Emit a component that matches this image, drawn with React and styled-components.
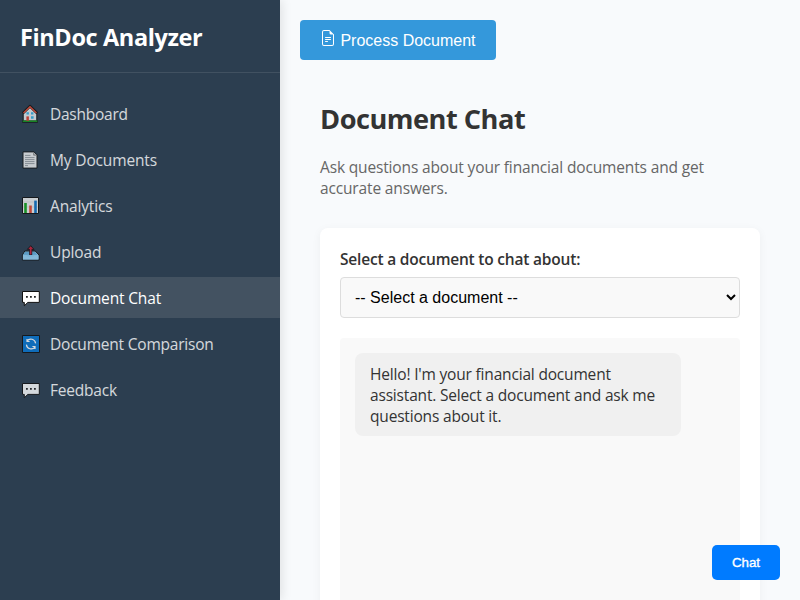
import React from 'react';
import styled, { createGlobalStyle, css } from 'styled-components';
import { BsFileEarmarkText } from 'react-icons/bs';

const GlobalStyle = createGlobalStyle`
  * { box-sizing: border-box; margin: 0; padding: 0; }
  body {
    height: 100vh;
    overflow: hidden;
    background: #f8fafc;
    color: #333;
    font: 400 15.5px/21px "Open Sans", "Noto Sans", sans-serif;
    letter-spacing: -0.15px;
  }
`;

const Layout = styled.div`
  display: flex;
  height: 100vh;
  overflow: hidden;
`;

const Sidebar = styled.aside`
  flex: none;
  width: 280px;
  background: #2c3e50;
  color: #fff;
  box-shadow: 2px 0 10px rgba(0, 0, 0, 0.1);
`;

const Brand = styled.h2`
  height: 73px;
  padding: 21px 20px 19px;
  border-bottom: 1px solid rgba(255, 255, 255, 0.1);
  font-size: 23.5px;
  line-height: 32px;
  font-weight: 700;
  letter-spacing: -0.38px;
`;

const Nav = styled.nav`
  display: flex;
  flex-direction: column;
  gap: 5px;
  padding: 20px 0;
`;

const NavItem = styled.a`
  display: flex;
  align-items: center;
  gap: 10px;
  height: 41px;
  padding: 0 20px;
  color: #fff;
  ${({ $active }) =>
    $active
      ? css`
          background: #435261;
        `
      : css`
          & > * {
            opacity: 0.8;
          }
        `}
`;

const NavIcon = styled.svg`
  display: block;
  flex: none;
  width: 20px;
  height: 20px;
`;

const NavLabel = styled.span`
  padding-top: 2px;
  letter-spacing: ${({ $track }) => $track || -0.15}px;
`;

const Main = styled.main`
  flex: 1;
  min-width: 0;
  padding: 20px;
`;

const ProcessButton = styled.button`
  display: flex;
  align-items: center;
  gap: 4.4px;
  width: 196px;
  height: 40px;
  padding: 2px 20px 0;
  border: 0;
  border-radius: 4px;
  background: #3498db;
  color: #fff;
  font: 16px "Liberation Sans", Arial, sans-serif;
  letter-spacing: 0;
  white-space: nowrap;

  svg {
    flex: none;
    margin-bottom: 6px;
  }
`;

const Content = styled.section`
  padding: 40px 20px 0;
`;

const Title = styled.h1`
  font-size: 27.2px;
  line-height: 38px;
  font-weight: 700;
  letter-spacing: -0.5px;
`;

const Intro = styled.p`
  margin-top: 19px;
  color: #666;
`;

const Card = styled.div`
  height: 600px;
  margin-top: 29px;
  padding: 20px;
  border-radius: 8px;
  background: #fff;
  box-shadow: 0 2px 10px rgba(0, 0, 0, 0.05);
`;

const Label = styled.label`
  display: block;
  height: 29px;
  padding-top: 1px;
  font-weight: 600;
  letter-spacing: -0.2px;
`;

const Select = styled.select`
  display: block;
  width: 100%;
  height: 41px;
  padding: 10px;
  border: 1px solid #ddd;
  border-radius: 4px;
  background-color: #f9f9f9;
  color: #000;
  font: 16px "Liberation Sans", Arial, sans-serif;
  letter-spacing: 0;
`;

const Messages = styled.div`
  height: 400px;
  margin-top: 20px;
  padding: 15px;
  border-radius: 4px;
  background: #f9f9f9;
`;

const Bubble = styled.p`
  width: 326px;
  padding: 11px 15px 9px;
  border-radius: 8px;
  background: #f0f0f0;
  letter-spacing: -0.18px;
`;

const ChatButton = styled.button`
  position: fixed;
  right: 20px;
  bottom: 20px;
  width: 68px;
  height: 35px;
  border: 0;
  border-radius: 5px;
  background: #007bff;
  color: #fff;
  font: 13.333px "Liberation Sans", Arial, sans-serif;
  letter-spacing: 0;
  -webkit-text-stroke: 0.35px #fff;
`;

const House = () => (
  <NavIcon viewBox="0 0 20 20">
    <path d="M3.2 9.6 10 2.4l6.8 7.2v8.2H3.2z" fill="#e8eef2" stroke="#111" />
    <path d="M2.8 9.2 10 2.2l7.2 7" fill="none" stroke="#111" strokeWidth="2.6" strokeLinejoin="round" />
    <path d="M3.5 8.9 10 2.7l6.5 6.2" fill="none" stroke="#e64b35" strokeWidth="1.4" />
    <path d="M2 17.5h16" stroke="#111" strokeWidth="2.2" />
    <path d="M2.6 17.2h14.8" stroke="#16a51c" strokeWidth="1.4" />
    <path d="M6.5 8.3h2.4v2.2H6.5zM11 8.3h2.4v2.2H11zM11 12.3h2.6v2.4H11z" fill="#38b6ea" />
    <path d="M6.4 12.4h2.5v4.4H6.4z" fill="#e04131" />
  </NavIcon>
);

const Page = () => (
  <NavIcon viewBox="0 0 20 20">
    <path d="M3 1.9h11l3 3v13.2H3z" fill="#f0f0f0" stroke="#151515" strokeLinejoin="round" />
    <path d="M13.6 2.4v2.8h2.9" fill="#bbb" stroke="#777" strokeWidth=".7" />
    <path d="M5 5.4h5.5M5 7.6h9.5M5 9.6h9.5M5 11.6h9.5M5 13.6h9.5M5 15.6h3" stroke="#9a9ea3" strokeWidth="1" />
  </NavIcon>
);

const Bars = () => (
  <NavIcon viewBox="0 0 20 20">
    <path d="M2.5 1.5h16v16h-16z" fill="#f2f2f2" stroke="#111" />
    <path d="M3 6h15M3 11h15" stroke="#d5d5d5" strokeWidth=".6" />
    <path d="M5.5 7v10" stroke="#14a51c" strokeWidth="2.6" />
    <path d="M10.5 9.5v7.5" stroke="#e64b35" strokeWidth="2.6" />
    <path d="M15.5 4.6v12.4" stroke="#0f74c8" strokeWidth="2.6" />
  </NavIcon>
);

const Outbox = () => (
  <NavIcon viewBox="0 0 20 20">
    <path d="M4.8 9h10.4l3.8 4v5H2.4v-5z" fill="#8fd0f7" stroke="#111" strokeLinejoin="round" />
    <path d="M5.2 9.9h9.8l2.5 2.8H3.2z" fill="#65b1df" />
    <path d="M2.9 13.2h3.6l1.3 1.5h5.8l1.3-1.5h3.6v4.3H2.9z" fill="#9bd7fa" />
    <path d="M10.7 13V6" stroke="#111" strokeWidth="3" />
    <path d="M10.7 3.7 7.4 7.4H14z" fill="#d5203c" stroke="#111" strokeWidth=".9" strokeLinejoin="round" />
    <path d="M10.7 12.5V6.6" stroke="#d5203c" strokeWidth="1.7" />
  </NavIcon>
);

const Speech = () => (
  <NavIcon viewBox="0 0 20 20">
    <path d="M2.5 3.5h16.8v10.9H7.8L4.3 17.8v-3.4H2.5z" fill="#fff" stroke="#111" strokeLinejoin="round" />
    <path d="M6 8h1.8v1.8H6zM10 8h1.8v1.8H10zM14 8h1.8v1.8H14z" fill="#222" />
  </NavIcon>
);

const Cycle = () => (
  <NavIcon viewBox="0 0 20 20">
    <path d="M2.5 1.5h17v17h-17z" fill="#0878d4" stroke="#111" />
    <path
      d="M7 7.2A4.7 4.7 0 0 1 15.6 9.4M7 4.9v2.6h2.6M15 12.8A4.7 4.7 0 0 1 6.4 10.6M15 15.1v-2.6h-2.6"
      fill="none"
      stroke="#fff"
      strokeWidth="1.2"
    />
  </NavIcon>
);

const items = [
  { label: 'Dashboard', Icon: House, track: -0.25 },
  { label: 'My Documents', Icon: Page },
  { label: 'Analytics', Icon: Bars },
  { label: 'Upload', Icon: Outbox },
  { label: 'Document Chat', Icon: Speech, active: true },
  { label: 'Document Comparison', Icon: Cycle, track: -0.21 },
  { label: 'Feedback', Icon: Speech, track: -0.2 },
];

export default function App() {
  return (
    <Layout>
      <GlobalStyle />
      <Sidebar>
        <Brand>FinDoc Analyzer</Brand>
        <Nav>
          {items.map(({ label, Icon, active, track }) => (
            <NavItem key={label} $active={active}>
              <Icon />
              <NavLabel $track={track}>{label}</NavLabel>
            </NavItem>
          ))}
        </Nav>
      </Sidebar>
      <Main>
        <ProcessButton>
          <BsFileEarmarkText size={16} />
          Process Document
        </ProcessButton>
        <Content>
          <Title>Document Chat</Title>
          <Intro>Ask questions about your financial documents and get accurate answers.</Intro>
          <Card>
            <Label htmlFor="document">Select a document to chat about:</Label>
            <Select id="document">
              <option>-- Select a document --</option>
            </Select>
            <Messages>
              <Bubble>
                Hello! I'm your financial document assistant. Select a document and ask me questions about it.
              </Bubble>
            </Messages>
          </Card>
        </Content>
      </Main>
      <ChatButton>Chat</ChatButton>
    </Layout>
  );
}
